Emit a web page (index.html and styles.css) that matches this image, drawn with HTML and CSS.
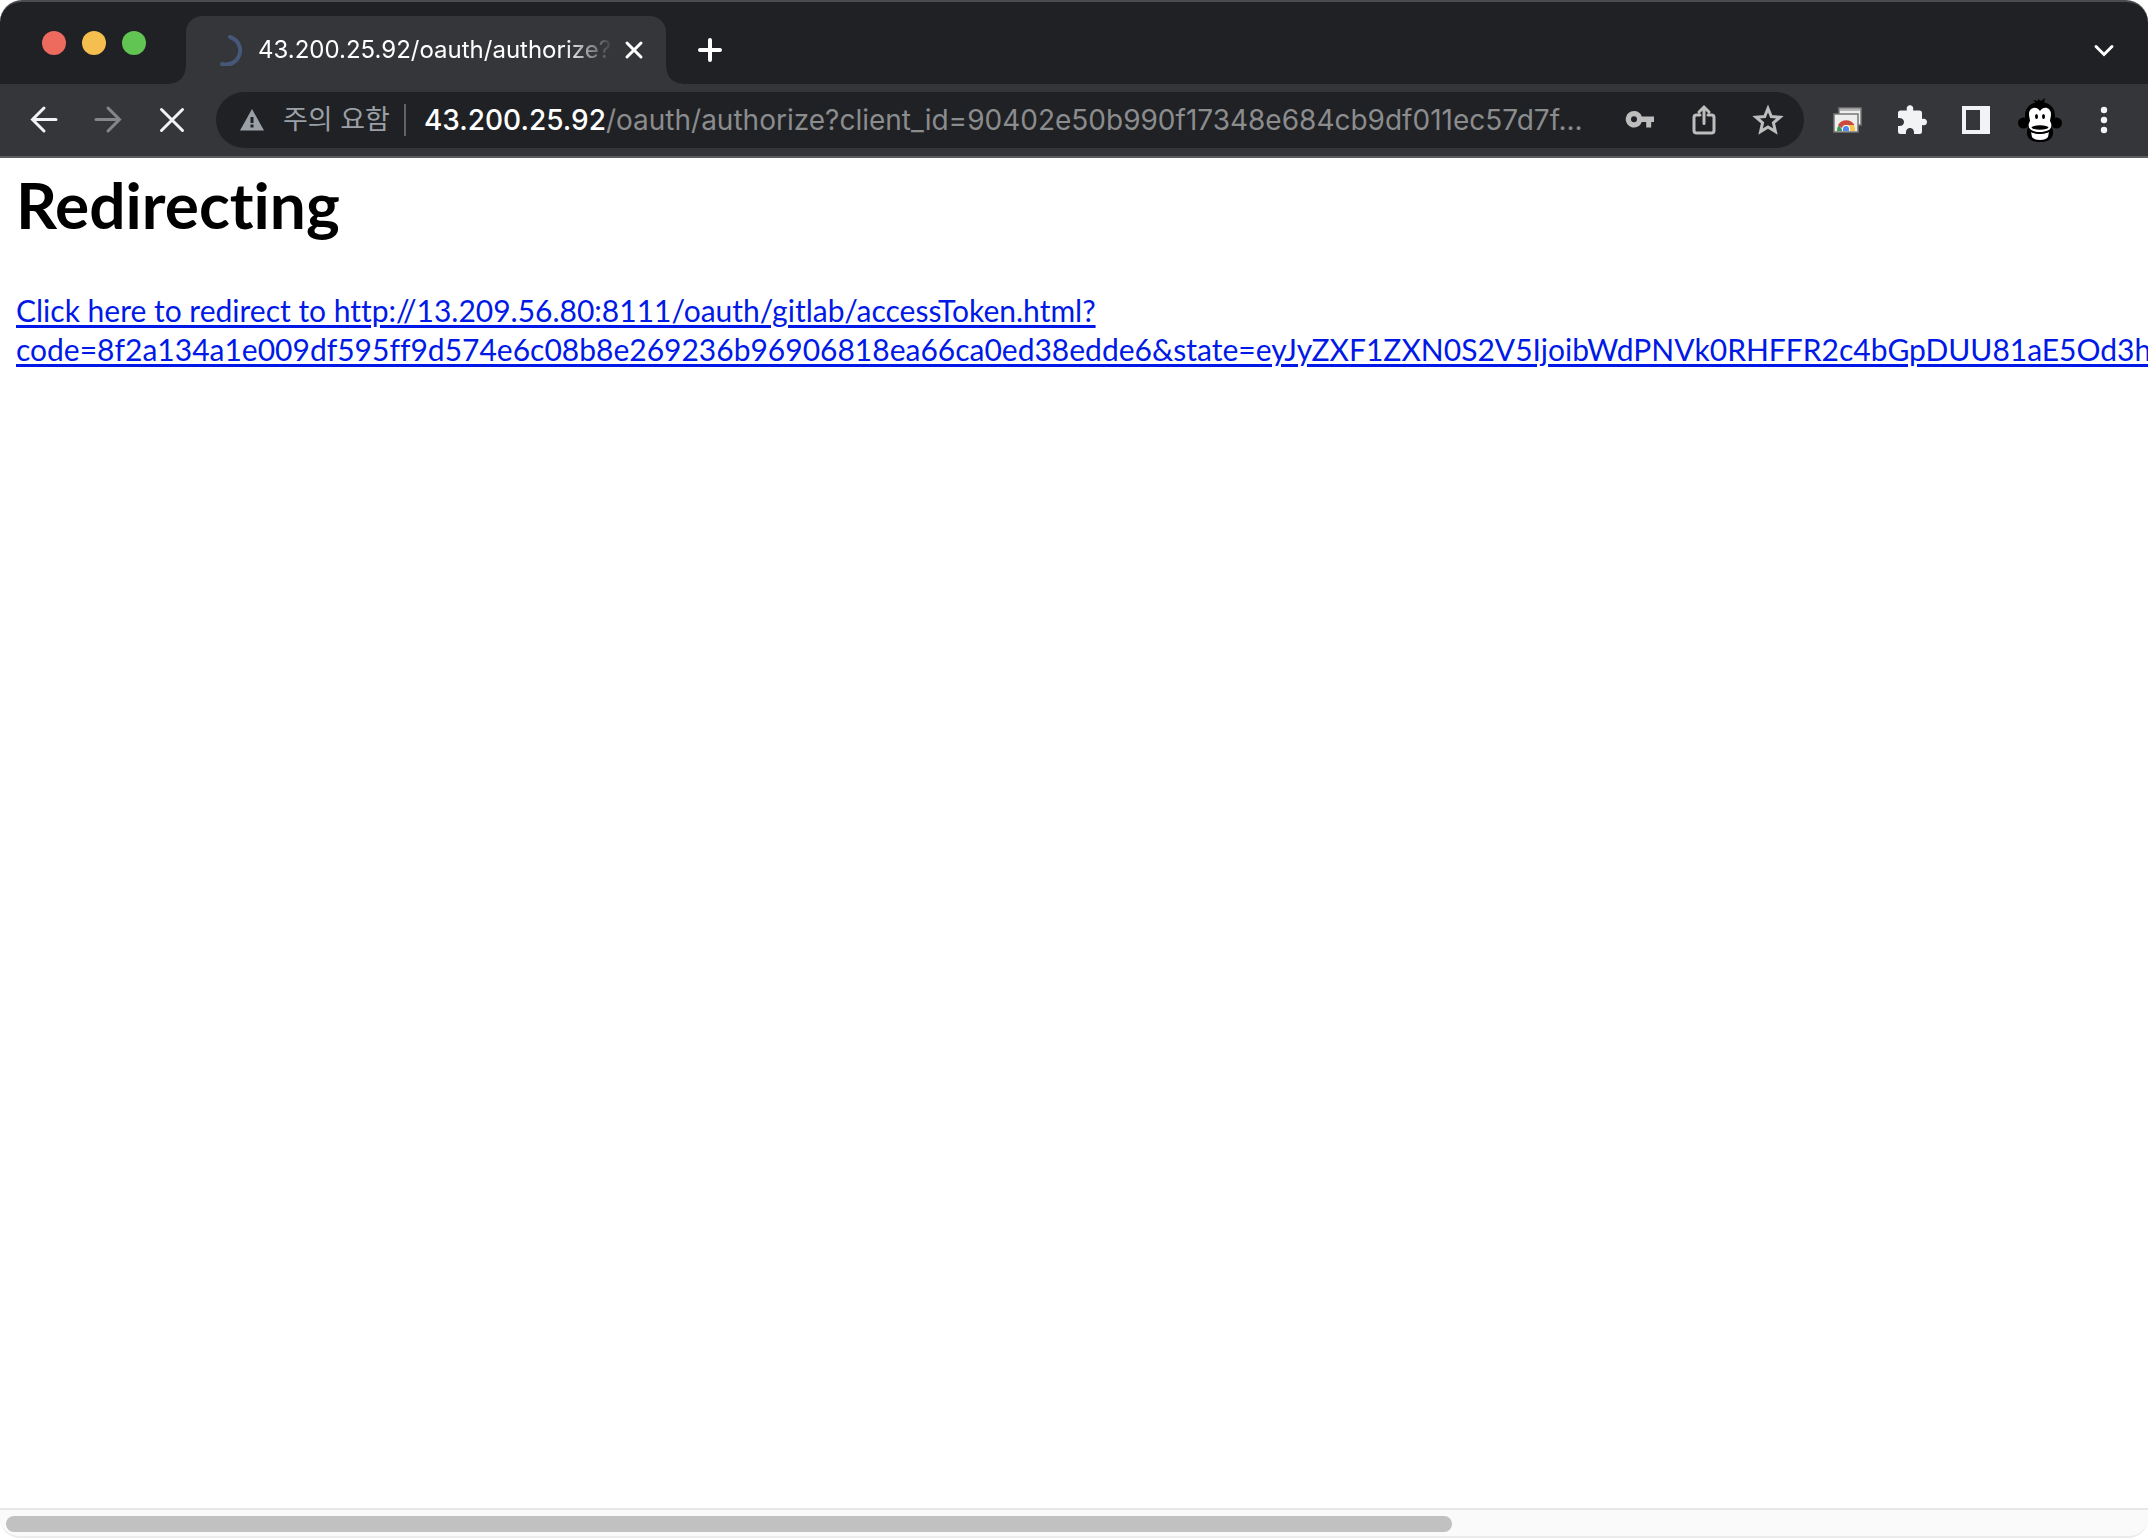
FILE: index.html
```html
<!DOCTYPE html>
<html lang="ko">
<head>
<meta charset="utf-8">
<title>43.200.25.92/oauth/authorize</title>
<link rel="stylesheet" href="styles.css">
</head>
<body>
<div class="window">
  <header class="tab-strip">
    <div class="window-controls">
      <button class="light light-close" aria-label="Close window"></button>
      <button class="light light-minimize" aria-label="Minimize window"></button>
      <button class="light light-zoom" aria-label="Zoom window"></button>
    </div>
    <div class="tab">
      <svg class="icon spinner" viewBox="0 0 32 32" aria-hidden="true"><path d="M20 3A14 14 0 0 1 12 30"/></svg>
      <span class="tab-title">43.200.25.92/oauth/authorize?</span>
      <button class="tab-button" aria-label="Close tab"><svg class="icon" viewBox="0 0 32 32"><path d="M9 9l14 14M23 9L9 23"/></svg></button>
    </div>
    <button class="tab-button new-tab" aria-label="New tab"><svg class="icon new-tab-icon" viewBox="0 0 32 32"><path d="M16 6v20M6 16h20"/></svg></button>
    <button class="tool tab-search" aria-label="Search tabs"><svg class="icon" viewBox="0 0 32 32"><path d="M8 12.500l8 8 8-8"/></svg></button>
  </header>

  <nav class="toolbar" aria-label="Browser toolbar">
    <button class="tool" aria-label="Back"><svg class="icon" viewBox="0 0 32 32"><path d="M28 15.500H4.500M16 4L4.500 15.500 16 27"/></svg></button>
    <button class="tool tool-muted" aria-label="Forward"><svg class="icon" viewBox="0 0 32 32"><path d="M4 15.500h23.500M16 4l11.500 11.500L16 27"/></svg></button>
    <button class="tool" aria-label="Stop"><svg class="icon" viewBox="0 0 32 32"><path d="M5.500 5.500l21 21M26.500 5.500l-21 21"/></svg></button>
    <div class="omnibox">
      <button class="security"><svg class="icon-small" viewBox="0 0 24 24" aria-hidden="true"><path fill="#9aa0a6" d="M12 1l12 21.500H0z"/><path fill="#202124" d="M10.500 9h3v6h-3zM10.500 16.500h3v3h-3z"/></svg>주의 요함</button>
      <div class="address" role="textbox" contenteditable="true" spellcheck="false" aria-label="Address"><span class="host">43.200.25.92</span>/oauth/authorize?client_id=90402e50b990f17348e684cb9df011ec57d7f...</div>
      <button class="tool tool-soft" aria-label="Passwords"><svg class="icon" viewBox="0 0 32 32"><path class="solid" fill-rule="evenodd" d="M10 7a8.300 8.300 0 1 0 7.800 11h4.400v5.500h5V18H30v-5.500H17.800A8.300 8.300 0 0 0 10 7zm0 5.200a3 3 0 1 1 0 6 3 3 0 0 1 0-6z"/></svg></button>
      <button class="tool tool-soft" aria-label="Share"><svg class="icon" viewBox="0 0 32 32"><path d="M12 11H8.500Q6 11 6 13.500v13Q6 29 8.500 29h15q2.500 0 2.500-2.500v-13Q26 11 23.500 11H20M16 19.500V3.500M11 8l5-5 5 5"/></svg></button>
      <button class="tool tool-soft" aria-label="Bookmark this tab"><svg class="icon" viewBox="0 0 32 32"><path class="star" d="M16 4.500l3.300 8 8.700.7-6.600 5.700 2 8.600-7.400-4.600-7.400 4.600 2-8.600L4 13.200l8.700-.7z"/></svg></button>
    </div>
    <button class="tool" aria-label="Remote desktop"><svg class="icon" viewBox="0 0 32 32"><g stroke-width="1.500" stroke="#777" fill="#eee"><path d="M7 4h22v17H7z"/><path d="M2 10h24v18H2z"/></g><path class="flat" fill="#b5b5b5" d="M8 5h20v2H8z"/><path class="flat" fill="#3a9858" d="M5 27a9 9 0 0 1 2-6l4 6z"/><path class="flat" fill="#ca4b3d" d="M6 21a9.500 9.500 0 0 1 16.500 0H14l-3 4z"/><path class="flat" fill="#f4c84e" d="M15 21h7a9 9 0 0 1 1 6h-6z"/><path class="flat" fill="#fff" d="M10 27v-2a4 4 0 0 1 8 0v2z"/><path class="flat" fill="#4e87ee" d="M11 27v-2a3 3 0 0 1 6 0v2z"/></svg></button>
    <button class="tool" aria-label="Extensions"><svg class="icon" viewBox="0 0 32 32"><path class="solid" d="M4.500 6.500h6.500C10 3.500 11.500 1.200 14 1.200s4 2.300 3 5.300h6.500Q26 6.500 26 9v6c3-1 5 .5 5 3s-2 4-5 3v6.500q0 2.500-2.500 2.500H18c.5-4-1.500-6-4-6s-4.500 2-4 6H4.500Q2 30 2 27.500V22c4 .5 6-1.500 6-4s-2-4.500-6-4V9q0-2.500 2.500-2.500z"/></svg></button>
    <button class="tool" aria-label="Side panel"><svg class="icon" viewBox="0 0 32 32"><path class="solid" fill-rule="evenodd" d="M2 2h28v28H2zM6 6v20h14V6z"/></svg></button>
    <button class="tool" aria-label="Profile"><svg class="avatar" viewBox="0 0 44 44"><g class="flat" fill="#000"><path d="M18 5l-3-3 5 1V1l3 2 4-3-1 5z"/><path d="M22 4C13 4 7 9 7 18c0 5 1 8 3 11-3 8 0 15 12 15s15-7 12-15c2-3 3-6 3-11 0-9-6-14-15-14z"/><circle cx="5.500" cy="25" r="5.500"/><circle cx="38.500" cy="25" r="5.500"/></g><g class="flat" fill="#fff"><path d="M22 13c-4-6-11-3-11 3 0 3 1 5 1 7-4 7 1 11 10 11s14-4 10-11c0-2 1-4 1-7 0-6-7-9-11-3z"/><path d="M13 34q9 4 18 0l-1 5q-2 3-8 3t-8-3z"/></g><path fill="none" stroke="#000" stroke-width="1.500" d="M12 33q10 4 20 0"/><g class="flat" fill="#000"><ellipse cx="18.500" cy="18.500" rx="1.500" ry="2.500"/><ellipse cx="25.500" cy="18.500" rx="1.500" ry="2.500"/><ellipse cx="22" cy="29.500" rx="8.500" ry="2.200"/></g></svg></button>
    <button class="tool" aria-label="Menu"><svg class="icon" viewBox="0 0 32 32"><g class="solid"><circle cx="16" cy="6" r="3.200"/><circle cx="16" cy="16" r="3.200"/><circle cx="16" cy="26" r="3.200"/></g></svg></button>
  </nav>

  <main class="page">
    <h1>Redirecting</h1>
    <a href="#">Click here to redirect to http://13.209.56.80:8111/oauth/gitlab/accessToken.html?<br>code=8f2a134a1e009df595ff9d574e6c08b8e269236b96906818ea66ca0ed38edde6&amp;state=eyJyZXF1ZXN0S2V5IjoibWdPNVk0RHFFR2c4bGpDUU81aE5Od3hia</a>
  </main>
  <div class="scroll-track"><div class="scroll-thumb"></div></div>
</div>
</body>
</html>
```
FILE: styles.css
```css
* { box-sizing: border-box; }

body { margin: 0; background: #fff; }

button {
  margin: 0;
  padding: 0;
  border: 0;
  background: none;
  color: inherit;
  font: inherit;
}

.window {
  display: flex;
  flex-direction: column;
  min-height: 100vh;
  overflow: hidden;
  font-family: Inter, "Noto Sans CJK KR", sans-serif;
}

.tab-strip {
  display: flex;
  align-items: flex-end;
  height: 84px;
  padding: 0 12px 0 42px;
  border-top: 2px solid #4b4c4f;
  border-radius: 22px 22px 0 0;
  background: #202124;
  color: #fff;
}

.window-controls {
  display: flex;
  gap: 16px;
  width: 144px;
  padding-bottom: 29px;
}

.light { width: 24px; height: 24px; border-radius: 50%; }
.light-close { background: #ed6a5e; }
.light-minimize { background: #f5bf4f; }
.light-zoom { background: #61c554; }

.tab {
  position: relative;
  display: flex;
  align-items: center;
  width: 480px;
  height: 68px;
  padding: 0 16px 0 24px;
  border-radius: 16px 16px 0 0;
  background: #35363a;
}

.tab::before,
.tab::after {
  content: "";
  position: absolute;
  bottom: 0;
  width: 16px;
  height: 16px;
}

.tab::before {
  right: 100%;
  background: radial-gradient(circle at 0 0, #202124 15px, #35363a 16px);
}

.tab::after {
  left: 100%;
  background: radial-gradient(circle at 100% 0, #202124 15px, #35363a 16px);
}

.icon {
  display: block;
  width: 32px;
  height: 32px;
  fill: none;
  stroke: currentColor;
  stroke-width: 3;
  stroke-linecap: round;
}

.spinner { color: #46587a; stroke-width: 4; }

.tab-title {
  flex: 1;
  margin: 0 4px 0 16px;
  overflow: hidden;
  font-size: 24px;
  line-height: 32px;
  white-space: nowrap;
  mask-image: linear-gradient(to right, #000 86%, transparent);
}

.tab-button { width: 32px; height: 32px; }
.new-tab { margin: 0 0 18px 28px; }
.new-tab-icon { stroke-width: 4; }

.tool {
  display: flex;
  flex: none;
  align-items: center;
  justify-content: center;
  width: 64px;
  height: 56px;
  color: #f1f3f4;
}

.tool-muted { color: #858688; }
.tool-soft { color: #bdbdbd; }
.tab-search { height: 68px; margin-left: auto; color: #fff; }

.toolbar {
  display: flex;
  align-items: center;
  height: 74px;
  padding: 0 12px;
  border-bottom: 2px solid #5b5c60;
  background: #35363a;
}

.omnibox {
  display: flex;
  flex: 1;
  align-items: center;
  min-width: 0;
  height: 56px;
  margin: 0 12px;
  padding: 0 4px 0 24px;
  border-radius: 28px;
  background: #202124;
}

.security {
  display: flex;
  align-items: center;
  gap: 19px;
  height: 32px;
  padding-right: 14px;
  border-right: 2px solid #5f6368;
  color: #9aa0a6;
  font-size: 27px;
  line-height: 30px;
  white-space: nowrap;
}

.icon-small { width: 24px; height: 24px; }

.address {
  flex: 1;
  min-width: 0;
  padding-left: 18px;
  overflow: hidden;
  color: #8b8c8e;
  font-size: 28px;
  line-height: 40px;
  white-space: nowrap;
}

.host { color: #fff; font-weight: 500; }

.solid { fill: currentColor; stroke: none; }
.flat { stroke: none; }
.star { stroke-linecap: butt; }
.avatar { width: 44px; height: 44px; }

.page {
  flex: 1;
  padding: 16px;
  overflow: hidden;
  color: #000;
  font-family: Lato, sans-serif;
  font-variant-ligatures: none;
}

.page h1 {
  margin: 0 0 55px;
  font-size: 64px;
  font-weight: 700;
  line-height: 62px;
}

.page a {
  display: block;
  color: #0019e6;
  font-size: 30px;
  line-height: 39px;
  text-decoration-thickness: 3px;
  text-underline-offset: 3px;
  white-space: nowrap;
}

.scroll-track {
  height: 30px;
  padding: 6px;
  border-top: 2px solid #e7e7e7;
  border-bottom: 2px solid #ebebeb;
  border-radius: 0 0 20px 20px;
  background: #fafafa;
}

.scroll-thumb {
  width: 67.7%;
  height: 16px;
  border-radius: 8px;
  background: #c1c1c1;
}
```
